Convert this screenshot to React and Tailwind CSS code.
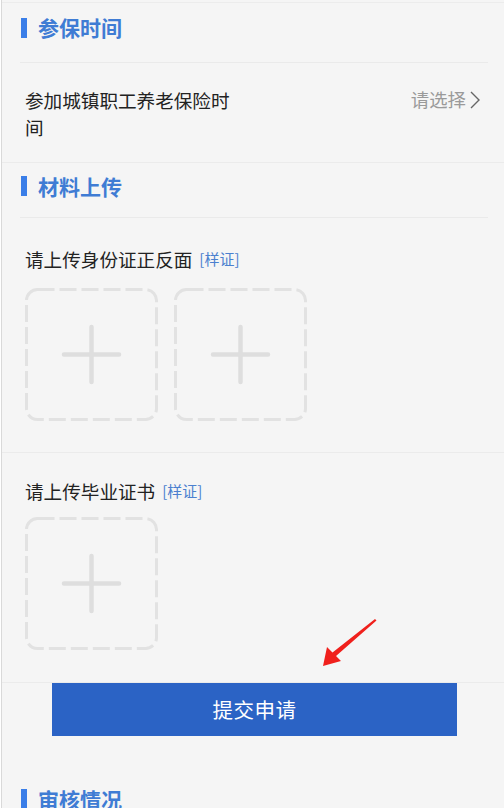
const font = { fontFamily: '"Noto Sans CJK SC", "Noto Sans", sans-serif' };

const SectionTitle = ({ title, className }) => (
    <div className={`flex items-center pl-[19px] ${className}`}>
        <span className="w-[6px] h-[20px] bg-[#3a7ee8]" />
        <span className="ml-[11px] text-[21px] font-bold text-[#3f7cd4] leading-none">{title}</span>
    </div>
);

const UploadBox = () => (
    <div className="w-[133px] h-[133px]">
        <svg width="133" height="133" viewBox="0 0 133 133">
            <rect x="1.5" y="1.5" width="130" height="130" rx="11" fill="none" stroke="#e2e2e2" strokeWidth="3" strokeDasharray="17 5" />
            <path d="M66.5 39v55M39 66.5h55" stroke="#dedede" strokeWidth="4.5" strokeLinecap="round" />
        </svg>
    </div>
);

const UploadLabel = ({ text }) => (
    <div className="flex items-center leading-[27px]">
        <span className="text-[18.6px] text-[#222]">{text}</span>
        <span className="ml-[7px] text-[15px] text-[#4b80cf]">[样证]</span>
    </div>
);

export default function App() {
    return (
        <div style={font} className="relative h-[808px] overflow-hidden bg-[#f5f5f5] ml-[1px] border-l border-[#d9d9d9]">
            <div className="border-t border-[#ececec] mt-[2px]" />

            <SectionTitle title="参保时间" className="h-[49px] mb-[10px]" />
            <div className="ml-[18px] mr-[16px] border-t border-[#eaeaea]" />

            <div className="flex justify-between pl-[23px] pr-[23px] pt-[23px] pb-[22px] border-b border-[#ebebeb]">
                <div className="w-[212px] text-[18.6px] leading-[27px] text-[#222]">参加城镇职工养老保险时间</div>
                <div className="flex items-center h-[27px] text-[18.4px] text-[#9a9a9a]">
                    请选择
                    <svg width="12" height="20" viewBox="0 0 12 20" className="ml-[3px]">
                        <path d="M2 2l8 8-8 8" fill="none" stroke="#666" strokeWidth="1.4" />
                    </svg>
                </div>
            </div>

            <SectionTitle title="材料上传" className="h-[46px] mb-[8px]" />
            <div className="ml-[18px] mr-[16px] border-t border-[#eaeaea]" />

            <div className="pl-[23px] pt-[27px] pb-[31px] border-b border-[#ebebeb]">
                <UploadLabel text="请上传身份证正反面" />
                <div className="flex gap-[16px] mt-[16px]">
                    <UploadBox />
                    <UploadBox />
                </div>
            </div>

            <div className="pl-[23px] pt-[24px] pb-[32px] border-b border-[#ebebeb]">
                <UploadLabel text="请上传毕业证书" />
                <div className="flex mt-[13px]">
                    <UploadBox />
                </div>
            </div>

            <div className="pl-[50px]">
                <button className="w-[405px] h-[53px] bg-[#2b63c5] text-white text-[20.5px] tracking-[0.5px]">提交申请</button>
            </div>

            <SectionTitle title="审核情况" className="h-[46px] mt-[40px]" />

            <svg width="62" height="56" viewBox="0 0 62 56" className="absolute left-[316px] top-[614px]">
                <polygon points="5,52 9,33 14.5,38.5 57,5 58.5,6.5 18,42 23,47" fill="#f0201c" />
            </svg>
        </div>
    );
}
